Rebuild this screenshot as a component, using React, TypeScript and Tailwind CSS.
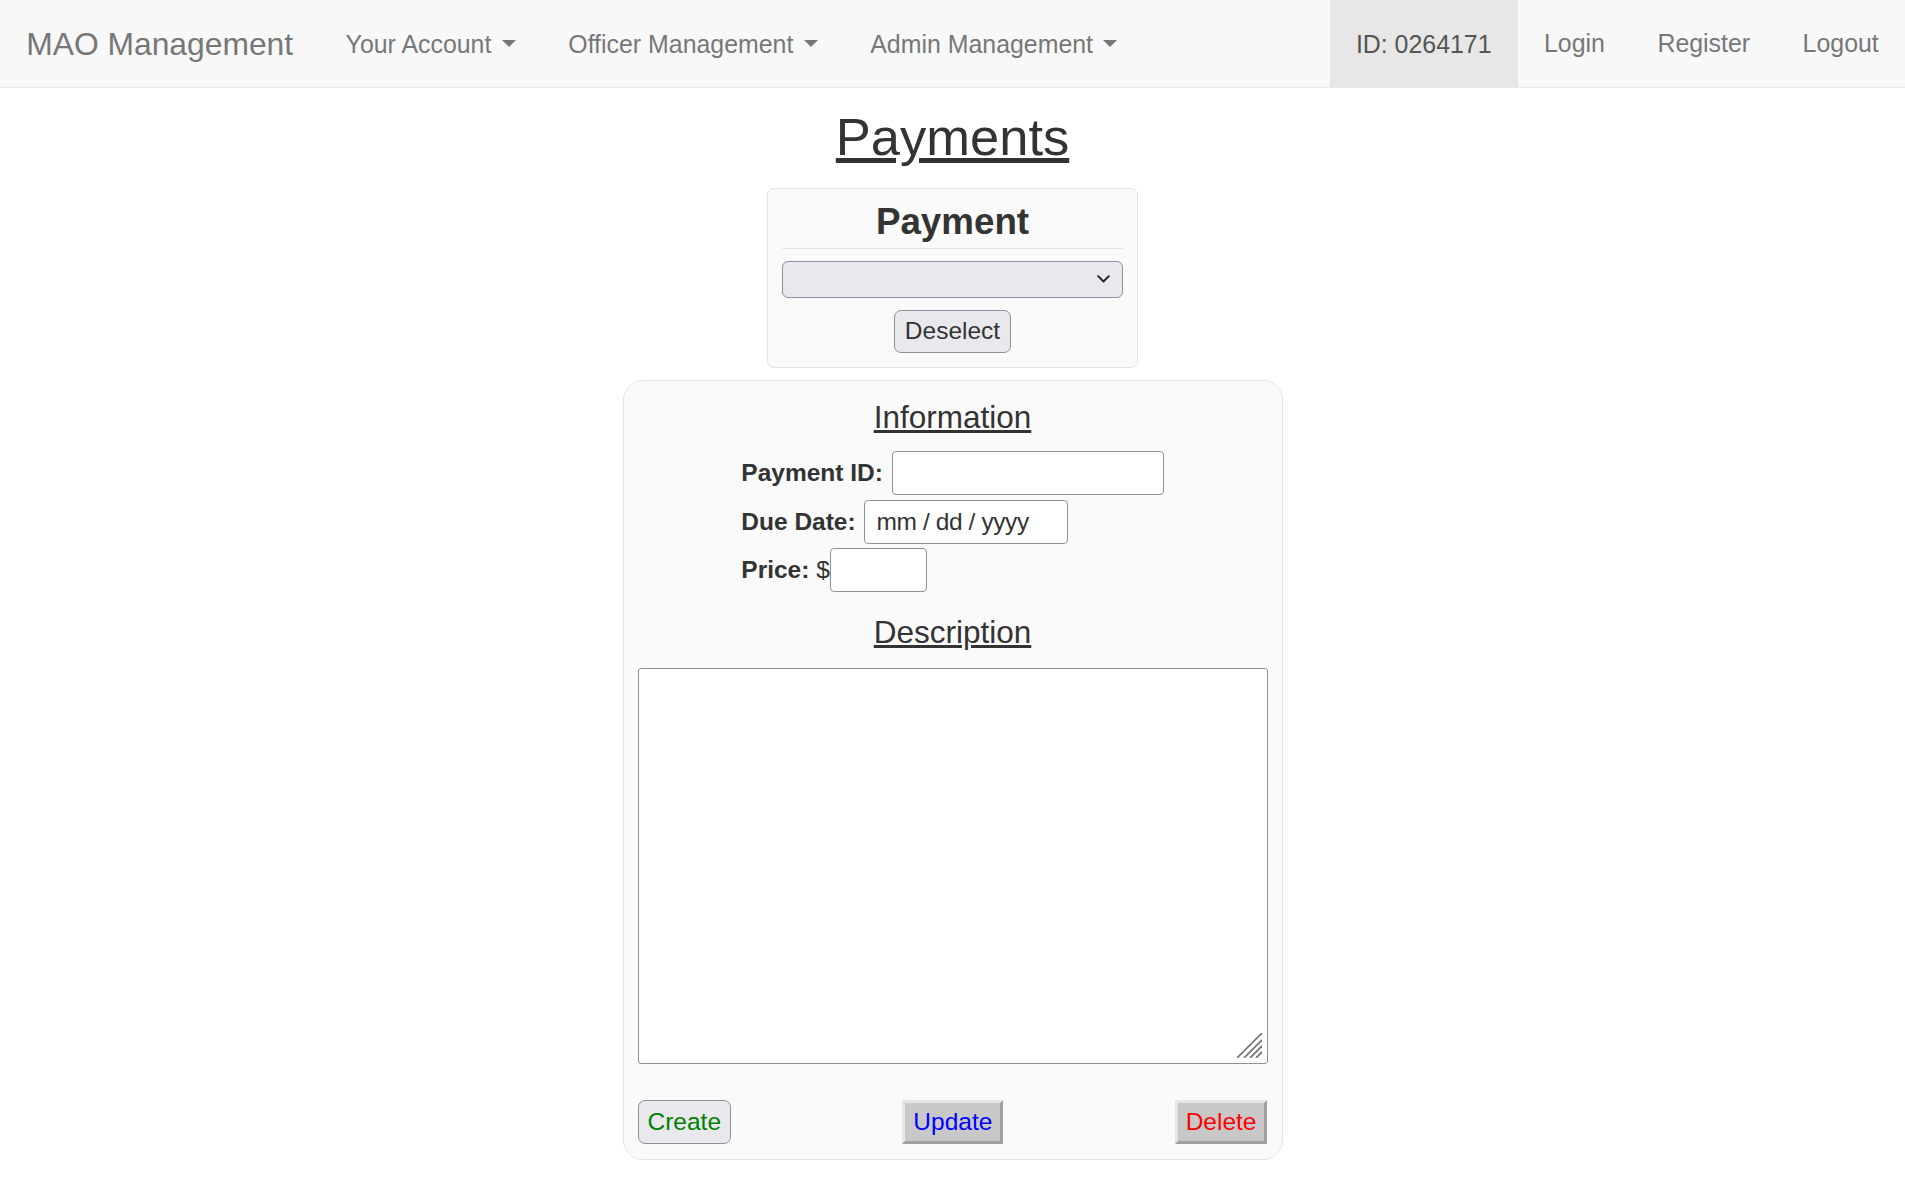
import React from "react";

function Caret() {
  return (
    <span className="inline-block w-0 h-0 ml-[3.5px] align-middle border-t-[7px] border-t-[#777] border-x-[7px] border-x-transparent relative top-[-2px]" />
  );
}

function NavLink({ children }: { children: React.ReactNode }) {
  return (
    <a className="flex items-center px-[26.25px] text-[#777] cursor-pointer whitespace-pre">
      <span>{children}</span>
    </a>
  );
}

function Grip() {
  return (
    <svg
      className="absolute right-[5px] bottom-[5px]"
      width="25"
      height="25"
      viewBox="0 0 25 25"
      fill="none"
      stroke="#7a7a7a"
      strokeWidth="1.8"
    >
      <line x1="0" y1="25" x2="25" y2="0" />
      <line x1="7" y1="25" x2="25" y2="7" />
      <line x1="13" y1="25" x2="25" y2="13" />
      <line x1="19" y1="25" x2="25" y2="19" />
    </svg>
  );
}

export default function App() {
  return (
    <div className="min-h-[1191px] bg-white font-['Liberation_Sans',Arial,Helvetica,sans-serif] text-[24.5px] text-[#333]">
      <nav className="h-[88px] pt-[1px] bg-[#f8f8f8] border-b border-[#e7e7e7] flex items-stretch leading-[35px] text-[24.9px]">
        <a className="flex items-center px-[26.25px] text-[31.8px] text-[#777] cursor-pointer">
          MAO Management
        </a>
        <NavLink>
          Your Account <Caret />
        </NavLink>
        <NavLink>
          Officer Management <Caret />
        </NavLink>
        <NavLink>
          Admin Management <Caret />
        </NavLink>
        <div className="ml-auto flex items-stretch -mt-[1px]">
          <a className="flex items-center pt-[1px] px-[26.25px] bg-[#e7e7e7] text-[#555]">ID: 0264171</a>
          <NavLink>Login</NavLink>
          <NavLink>Register</NavLink>
          <NavLink>Logout</NavLink>
        </div>
      </nav>

      <main className="flex flex-col items-center">
        <h2 className="mt-[20px] mb-[22px] text-[52.5px] leading-[1.1] underline font-normal">
          Payments
        </h2>

        <div className="w-[371px] border border-[#e3e3e3] rounded-[7px] bg-[#fafafa] px-[14px] pt-[13px] pb-[14px] flex flex-col items-center">
          <div className="w-full text-center font-bold text-[36.75px] leading-[40px] pb-[6px] border-b border-[#e5e5e5]">
            Payment
          </div>
          <div className="mt-[12px] w-full h-[37px] bg-[#e9e9ed] border border-[#8f8f9d] rounded-[6px] flex items-center justify-end pr-[12px]">
            <svg width="13" height="8" viewBox="0 0 13 8" fill="none" stroke="#222" strokeWidth="1.9" strokeLinecap="round" strokeLinejoin="round">
              <path d="M1.2 1.2 L6.5 6.5 L11.8 1.2" />
            </svg>
          </div>
          <button className="mt-[12px] h-[43px] px-[10px] bg-[#e9e9ed] border border-[#8f8f9d] rounded-[7px] text-[24.5px] leading-[28px] text-[#333]">
            Deselect
          </button>
        </div>

        <div className="mt-[12px] w-[660px] border border-[#e5e5e5] rounded-[20px] bg-[#fafafa] px-[14px] pt-[19px] pb-[15px] flex flex-col">
          <div className="text-center text-[31.5px] leading-[34.65px] underline">Information</div>

          <div className="mt-[17px] mx-auto w-fit flex flex-col items-start gap-[4.5px]">
            <div className="flex items-center h-[44px]">
              <span className="font-bold whitespace-pre">Payment ID: </span>
              <div className="w-[272px] h-[44px] bg-white border border-[#8f8f9d] rounded-[4px] ml-[2px]" />
            </div>
            <div className="flex items-center h-[44px]">
              <span className="font-bold whitespace-pre">Due Date: </span>
              <div className="w-[204px] h-[44px] bg-white border border-[#8f8f9d] rounded-[4px] ml-[2px] flex items-center pl-[11px] text-[#333] tracking-[-0.4px]">
                mm / dd / yyyy
              </div>
            </div>
            <div className="flex items-center h-[44px]">
              <span className="font-bold whitespace-pre">Price: </span>
              <span>$</span>
              <div className="w-[97px] h-[44px] bg-white border border-[#8f8f9d] rounded-[4px]" />
            </div>
          </div>

          <div className="mt-[23px] text-center text-[31.5px] leading-[34.65px] underline">Description</div>

          <div className="mt-[18px] relative w-full h-[396px] bg-white border border-[#8f8f9d] rounded-[3px]">
            <Grip />
          </div>

          <div className="mt-[36px] flex justify-between items-center">
            <button className="h-[44px] px-[9px] bg-[#e9e9ed] border border-[#8f8f9d] rounded-[7px] text-[24.5px] leading-[28px] text-[#008000]">
              Create
            </button>
            <button className="h-[44px] px-[8px] bg-[#c8c8c8] border-[3px] border-t-[#e6e6e6] border-l-[#e6e6e6] border-b-[#a0a0a0] border-r-[#a0a0a0] text-[24.5px] leading-[28px] text-[#0000ff]">
              Update
            </button>
            <button className="h-[44px] px-[8px] bg-[#c8c8c8] border-[3px] border-t-[#e6e6e6] border-l-[#e6e6e6] border-b-[#a0a0a0] border-r-[#a0a0a0] text-[24.5px] leading-[28px] text-[#ff0000]">
              Delete
            </button>
          </div>
        </div>
      </main>
    </div>
  );
}
